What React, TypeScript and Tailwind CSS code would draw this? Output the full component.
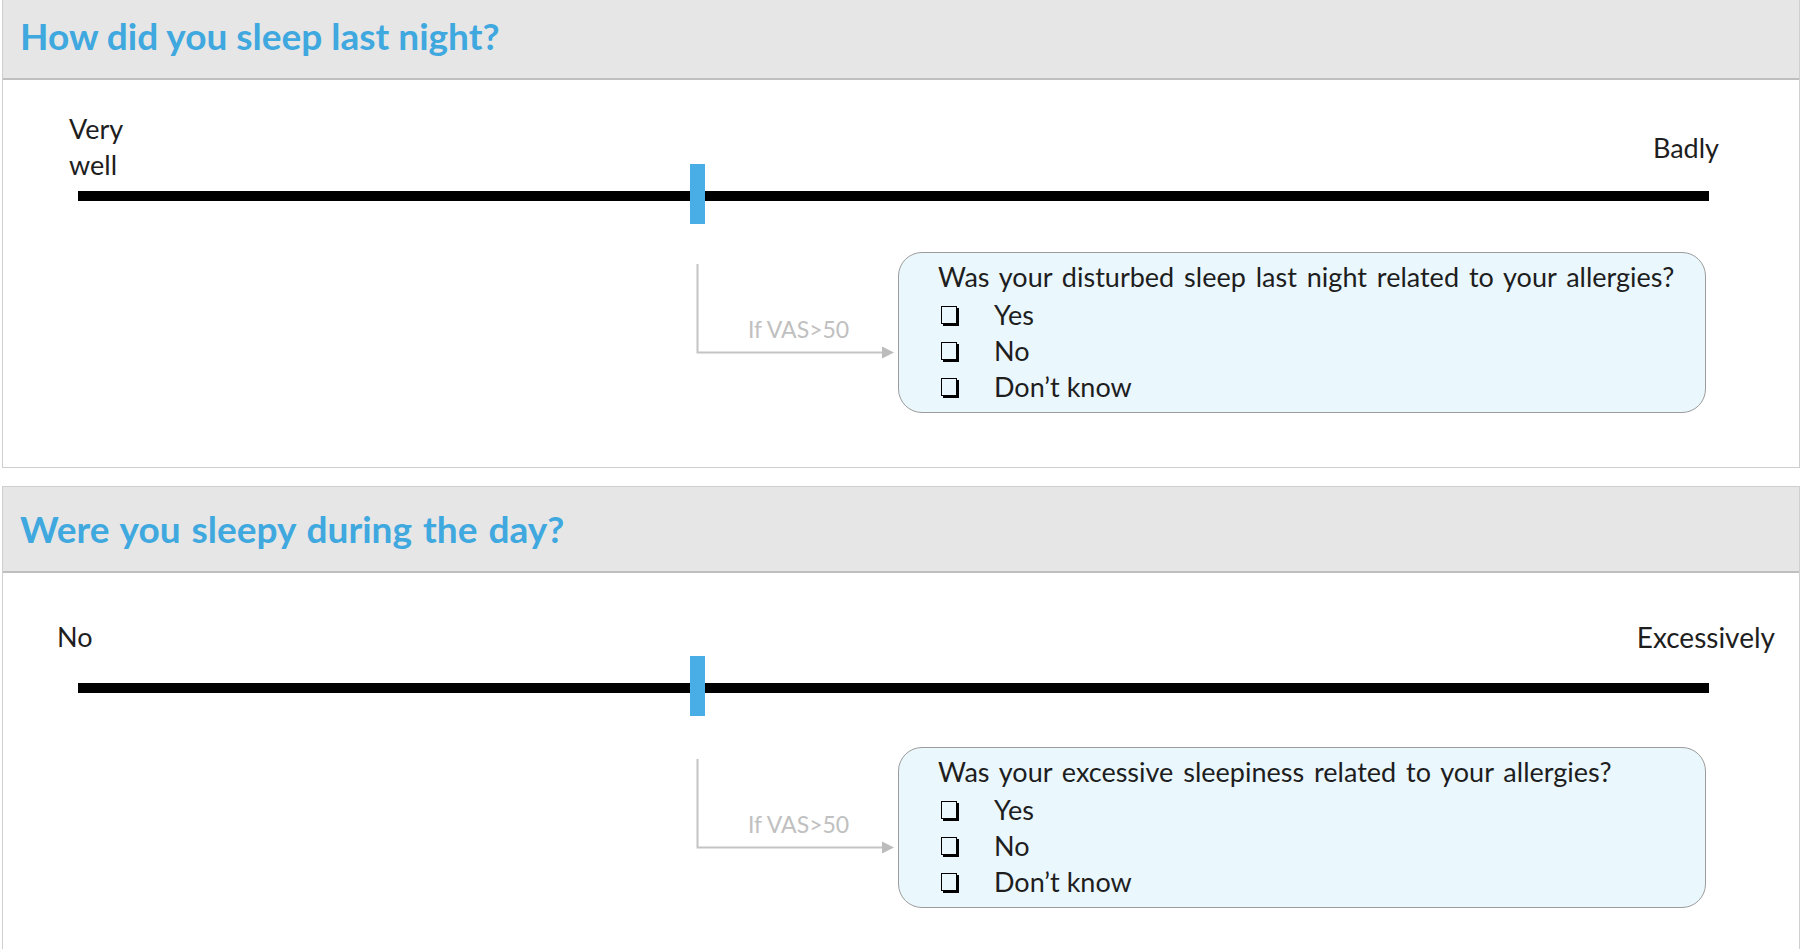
const font = { fontFamily: "Lato, 'Open Sans', sans-serif" };

function Checkbox({ label }: { label: string }) {
  return (
    <div className="flex items-center h-[36px]">
      <span className="ml-[3px] w-[16px] h-[18px] border-[1.5px] border-black shadow-[2px_2px_0_#000]" />
      <span className="ml-[37px]">{label}</span>
    </div>
  );
}

function Followup({ question }: { question: string }) {
  return (
    <div className="flex ml-[687px]">
      <div className="relative w-[208px] h-[161px]">
        <svg width="208" height="161" className="absolute inset-0">
          <path d="M7.5 12 V100.5 H194" stroke="#c4c4c4" strokeWidth="2" fill="none" />
          <path d="M192 94.5 L204 100.5 L192 106.5 Z" fill="#bcbcbc" />
        </svg>
        <span className="absolute left-[58px] top-[63px] text-[23px] leading-[28px] text-[#c0c0c0]">If VAS&gt;50</span>
      </div>
      <div className="w-[808px] h-[161px] rounded-[24px] border-[1.5px] border-[#9c9c9c] bg-[#eaf7fd] pl-[39px] pt-[6px] text-[27px] text-[#1e1e1e]">
        <div className="leading-[36px] [word-spacing:3px]">{question}</div>
        <div className="mt-[2px]">
          <Checkbox label="Yes" />
          <Checkbox label="No" />
          <Checkbox label="Don’t know" />
        </div>
      </div>
    </div>
  );
}

function Slider() {
  return (
    <div className="relative ml-[75px] w-[1631px] h-[10px] bg-black">
      <div className="absolute left-[612px] top-[-27px] w-[15px] h-[60px] bg-[#4aaee6]" />
    </div>
  );
}

export default function App() {
  return (
    <main className="bg-white w-[1800px] h-[949px] overflow-hidden" style={font}>
      <section className="ml-[2px] border-x border-b border-[#cfcfcf] h-[468px]">
        <header className="h-[80px] bg-[#e6e6e6] border-b-2 border-[#bfbfbf] flex items-center pb-[6px] pl-[17px]">
          <h2 className="text-[37px] font-bold text-[#3fa8df]">How did you sleep last night?</h2>
        </header>
        <div className="pt-[31px] text-[27px] text-[#1e1e1e]">
          <div className="flex justify-between items-end pl-[66px] pr-[80px] h-[72px]">
            <div className="leading-[36px]">
              Very
              <br />
              well
            </div>
            <div className="leading-[36px] mb-[17px]">Badly</div>
          </div>
          <div className="mt-[8px]">
            <Slider />
          </div>
          <div className="mt-[51px]">
            <Followup question="Was your disturbed sleep last night related to your allergies?" />
          </div>
        </div>
      </section>

      <section className="ml-[2px] mt-[18px] border-x border-t border-[#cfcfcf] h-[480px]">
        <header className="h-[86px] bg-[#e6e6e6] border-b-2 border-[#bfbfbf] flex items-center pl-[17px]">
          <h2 className="text-[37px] font-bold text-[#3fa8df] [word-spacing:2px]">Were you sleepy during the day?</h2>
        </header>
        <div className="pt-[46px] text-[27px] text-[#1e1e1e]">
          <div className="flex justify-between items-center pl-[54px] pr-[24px] h-[36px] leading-[36px]">
            <div>No</div>
            <div className="text-[28px]">Excessively</div>
          </div>
          <div className="mt-[28px]">
            <Slider />
          </div>
          <div className="mt-[54px]">
            <Followup question="Was your excessive sleepiness related to your allergies?" />
          </div>
        </div>
      </section>
    </main>
  );
}
